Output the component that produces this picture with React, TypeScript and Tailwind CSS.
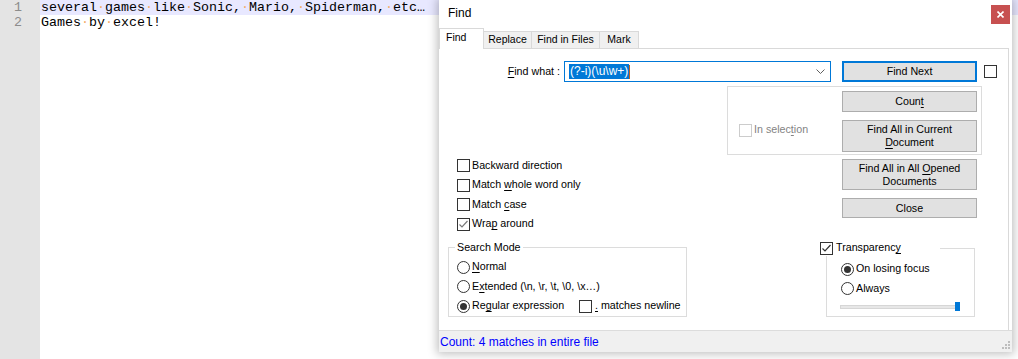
import React from "react";

const ui = "font-['Liberation_Sans',Arial,sans-serif]";
const mono = "font-['Liberation_Mono','Courier_New',monospace]";

function U({ children }: { children: React.ReactNode }) {
  return <span className="underline underline-offset-[2px] decoration-[1px]">{children}</span>;
}

function Box({ checked, disabled, tick = "#333333" }: { checked?: boolean; disabled?: boolean; tick?: string }) {
  return (
    <span
      className={`w-[13px] h-[13px] shrink-0 border bg-white flex items-center justify-center ${
        disabled ? "border-[#cccccc]" : "border-[#333333]"
      }`}
    >
      {checked && (
        <svg width="11" height="11" viewBox="0 0 11 11">
          <polyline points="1.5,5.5 4,8 9.5,2" fill="none" stroke={tick} strokeWidth="1.2" />
        </svg>
      )}
    </span>
  );
}

function Radio({ on }: { on?: boolean }) {
  return (
    <span className="w-[13px] h-[13px] shrink-0 rounded-full border border-[#333333] bg-white flex items-center justify-center">
      {on && <span className="w-[7px] h-[7px] rounded-full bg-[#333333]" />}
    </span>
  );
}

// label next to a checkbox / radio, sits a touch above the box centre
function Label({ children, className = "ml-[2px]" }: { children: React.ReactNode; className?: string }) {
  return <span className={`mb-[2px] ${className}`}>{children}</span>;
}

function Btn({ children, className = "" }: { children: React.ReactNode; className?: string }) {
  return (
    <div
      className={`w-[135px] bg-[#e1e1e1] border border-[#adadad] flex items-center justify-center text-center leading-[13px] text-black ${className}`}
    >
      <span>{children}</span>
    </div>
  );
}

function Line({ text }: { text: string }) {
  const parts = text.split(" ");
  return (
    <>
      {parts.map((p, i) => (
        <React.Fragment key={i}>
          {i > 0 && <span className="text-[#f4ad66]">·</span>}
          {p}
        </React.Fragment>
      ))}
    </>
  );
}

export default function App() {
  return (
    <div className="relative w-[1018px] h-[359px] overflow-hidden bg-white">
      {/* editor behind */}
      <div className={`flex h-full ${mono} text-[13.33px] leading-[15px]`}>
        <div className="w-[40px] h-full bg-[#e4e4e4] text-[#8c8c8c]">
          <div className="w-[24px] pr-[2px] text-right">1</div>
          <div className="w-[24px] pr-[2px] text-right">2</div>
        </div>
        <div className="flex-1 text-black">
          <div className="bg-[#e8e8ff] pl-[1px] whitespace-pre">
            <Line text="several games like Sonic, Mario, Spiderman, etc…" />
          </div>
          <div className="pl-[1px] whitespace-pre">
            <Line text="Games by excel!" />
          </div>
        </div>
      </div>

      {/* find dialog */}
      <div
        className={`absolute left-[439px] top-0 w-[573px] h-[352px] bg-white flex flex-col shadow-[0_0_9px_2px_rgba(0,0,0,0.25)] ${ui} text-[10.7px] text-black`}
      >
        {/* title bar */}
        <div className="h-[28px] flex items-center justify-between pl-[9px] pr-[2px]">
          <span className="text-[12px] mb-[2px]">Find</span>
          <div className="w-[19px] h-[19px] bg-[#c75050] flex items-center justify-center">
            <svg width="7" height="7" viewBox="0 0 7 7">
              <path d="M0.5 0.5 L6.5 6.5 M6.5 0.5 L0.5 6.5" stroke="#ffffff" strokeWidth="1.6" />
            </svg>
          </div>
        </div>

        {/* tabs */}
        <div className="h-[20px] flex items-end text-[10.5px]">
          <div className="relative z-10 w-[45px] h-[21px] -mb-px bg-white border-l border-t border-r border-[#d9d9d9] pl-[6px] pt-[1px]">
            Find
          </div>
          <div className="w-[48px] h-[17px] bg-[#f0f0f0] border-t border-r border-[#d9d9d9] flex items-center justify-center">
            Replace
          </div>
          <div className="w-[68px] h-[17px] bg-[#f0f0f0] border-t border-r border-[#d9d9d9] flex items-center justify-center">
            Find in Files
          </div>
          <div className="w-[39px] h-[17px] bg-[#f0f0f0] border-t border-r border-[#d9d9d9] flex items-center justify-center">
            Mark
          </div>
        </div>

        {/* tab panel */}
        <div className="w-[570px] h-[282px] border-t border-r border-[#d9d9d9] pt-[12px]">
          {/* find what row */}
          <div className="flex items-center h-[21px]">
            <div className="w-[121px] text-right">
              <U>F</U>ind what :
            </div>
            <div className="ml-[4px] w-[267px] h-[21px] border border-[#0078d7] flex items-center pl-[4px] pr-[5px]">
              <span className="bg-[#0078d7] text-white text-[12px] leading-[15px] px-[1px]">(?-i)(\u\w+)</span>
              <span className="w-[1px] h-[14px] bg-[#c06020]" />
              <svg className="ml-auto" width="9" height="5" viewBox="0 0 9 5">
                <polyline points="0.5,0.5 4.5,4.5 8.5,0.5" fill="none" stroke="#606060" strokeWidth="1" />
              </svg>
            </div>
            <div className="ml-[11px] w-[135px] h-[21px] bg-[#e1e1e1] border-2 border-[#0078d7] flex items-center justify-center">
              Find Next
            </div>
            <div className="ml-[7px]">
              <Box />
            </div>
          </div>

          {/* selection group */}
          <div className="mt-[4px] ml-[288px] w-[255px] h-[69px] border border-[#dcdcdc] pl-[11px] pt-[4px] flex">
            <div className="w-[103px] mt-[33px] flex items-start">
              <div className="flex items-center h-[13px] text-[#838383]">
                <Box disabled />
                <Label>
                  In selec<U>t</U>ion
                </Label>
              </div>
            </div>
            <div className="flex flex-col gap-[8px]">
              <Btn className="h-[21px]">
                Coun<U>t</U>
              </Btn>
              <Btn className="h-[32px]">
                Find All in Current
                <br />
                <U>D</U>ocument
              </Btn>
            </div>
          </div>

          {/* options + buttons */}
          <div className="flex">
            <div className="w-[403px] pl-[18px] pt-[1px] flex flex-col">
              <div className="h-[19.5px] flex items-center">
                <Box />
                <Label>Backward direction</Label>
              </div>
              <div className="h-[19.5px] flex items-center">
                <Box />
                <Label>
                  Match <U>w</U>hole word only
                </Label>
              </div>
              <div className="h-[19.5px] flex items-center">
                <Box />
                <Label>
                  Match <U>c</U>ase
                </Label>
              </div>
              <div className="h-[19.5px] flex items-center">
                <Box checked tick="#7a7a7a" />
                <Label>
                  Wra<U>p</U> around
                </Label>
              </div>
            </div>
            <div className="pt-[4px] flex flex-col gap-[8px]">
              <Btn className="h-[31px]">
                Find All in All <U>O</U>pened
                <br />
                Documents
              </Btn>
              <Btn className="h-[20px]">Close</Btn>
            </div>
          </div>

          {/* group boxes */}
          <div className="mt-[6px] flex items-start">
            <fieldset className="ml-[9px] w-[239px] h-[77px] border border-[#dcdcdc] pl-[6px]">
              <legend className="px-[2px] leading-[14px]">Search Mode</legend>
              <div className="pl-[2px] pt-[3.5px]">
                <div className="h-[19.5px] flex items-center">
                  <Radio />
                  <Label>
                    <U>N</U>ormal
                  </Label>
                </div>
                <div className="h-[19.5px] flex items-center">
                  <Radio />
                  <Label>
                    E<U>x</U>tended (\n, \r, \t, \0, \x…)
                  </Label>
                </div>
                <div className="h-[19.5px] flex items-center">
                  <div className="w-[122px] flex items-center">
                    <Radio on />
                    <Label>
                      Re<U>g</U>ular expression
                    </Label>
                  </div>
                  <Box />
                  <Label className="ml-[3px]">
                    <U>.</U> matches newline
                  </Label>
                </div>
              </div>
            </fieldset>

            <fieldset className="ml-[139px] w-[149px] h-[77px] border border-[#dcdcdc]">
              <legend className="-ml-[7px] w-[120px] bg-white leading-[14px]">
                <span className="flex items-center">
                  <Box checked />
                  <Label className="ml-[3px]">
                    Transparenc<U>y</U>
                  </Label>
                </span>
              </legend>
              <div className="pl-[14px] pt-[3.5px]">
                <div className="h-[19.5px] flex items-center">
                  <Radio on />
                  <Label>On losing focus</Label>
                </div>
                <div className="h-[19.5px] flex items-center">
                  <Radio />
                  <Label>Always</Label>
                </div>
                <div className="pt-[3.5px]">
                  <div className="relative -ml-[1px] w-[120px] h-[9px]">
                    <div className="absolute left-0 right-0 top-[2.5px] h-[4px] bg-[#e7e7e7] border border-[#d6d6d6]" />
                    <div className="absolute left-[115px] top-0 w-[5px] h-[9px] bg-[#0078d7]" />
                  </div>
                </div>
              </div>
            </fieldset>
          </div>
        </div>

        {/* status bar */}
        <div className="h-[22px] bg-[#f0f0f0] border-t border-[#dcdcdc] flex items-center pl-[1px] pr-[2px] text-[12px] text-[#0000ff]">
          <span>Count: 4 matches in entire file</span>
          <svg className="ml-auto self-end mb-[1px]" width="10" height="10" viewBox="0 0 10 10">
            <rect x="8" y="0" width="2" height="2" fill="#bdbdbd" />
            <rect x="5" y="3" width="2" height="2" fill="#bdbdbd" />
            <rect x="8" y="3" width="2" height="2" fill="#bdbdbd" />
            <rect x="2" y="6" width="2" height="2" fill="#bdbdbd" />
            <rect x="5" y="6" width="2" height="2" fill="#bdbdbd" />
            <rect x="8" y="6" width="2" height="2" fill="#bdbdbd" />
          </svg>
        </div>
      </div>
    </div>
  );
}
